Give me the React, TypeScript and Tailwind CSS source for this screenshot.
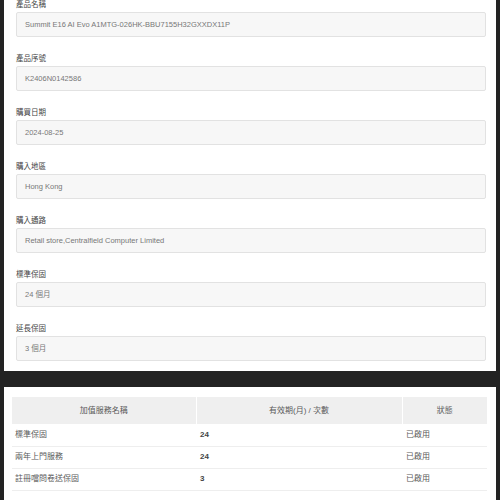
const fields = [
  { label: "產品名稱", value: "Summit E16 AI Evo A1MTG-026HK-BBU7155H32GXXDX11P" },
  { label: "產品序號", value: "K2406N0142586" },
  { label: "購買日期", value: "2024-08-25" },
  { label: "購入地區", value: "Hong Kong" },
  { label: "購入通路", value: "Retail store,Centralfield Computer Limited" },
  { label: "標準保固", value: "24 個月" },
  { label: "延長保固", value: "3 個月" },
]

const services = [
  { name: "標準保固", period: "24", status: "已啟用" },
  { name: "兩年上門服務", period: "24", status: "已啟用" },
  { name: "註冊噹問卷送保固", period: "3", status: "已啟用" },
]

export default function App() {
  return (
    <div
      className="w-[500px] h-[500px] overflow-hidden bg-[#232323] pl-[4px] pr-[4px]"
      style={{ fontFamily: '"Liberation Sans", "Noto Sans CJK TC", sans-serif' }}
    >
      {/* Product info panel */}
      <div className="bg-white pl-3 pr-[10px] h-[371px] overflow-hidden">
        <div className="-mt-[2px] flex flex-col gap-[15px]">
          {fields.map((f) => (
            <div key={f.label} className="flex flex-col gap-[1px]">
              <div className="text-[7.5px] leading-[13px] text-[#444]">{f.label}</div>
              <div className="h-[25px] flex items-center px-2 bg-[#f7f7f7] border border-[#e2e2e2] rounded-[2px] text-[7.5px] text-[#777]">
                {f.value}
              </div>
            </div>
          ))}
        </div>
      </div>

      {/* Services table panel */}
      <div className="bg-white mt-[16px] pt-[10px] pl-2 pr-[9px] h-[200px]">
        <table className="w-full border-collapse text-[8px] text-[#5a5a5a]">
          <thead>
            <tr className="bg-[#efefef] h-[27px]">
              <th className="w-[184px] font-normal text-center border-r border-white">加值服務名稱</th>
              <th className="w-[206px] font-normal text-center border-r border-white">有效期(月) / 次數</th>
              <th className="font-normal text-center">狀態</th>
            </tr>
          </thead>
          <tbody>
            {services.map((s) => (
              <tr key={s.name} className="h-[22px] border-b border-[#eeeeee]">
                <td className="pl-[3px]">{s.name}</td>
                <td className="pl-[4px] font-bold text-[#444]">{s.period}</td>
                <td className="pl-[4px]">{s.status}</td>
              </tr>
            ))}
          </tbody>
        </table>
      </div>
    </div>
  )
}
